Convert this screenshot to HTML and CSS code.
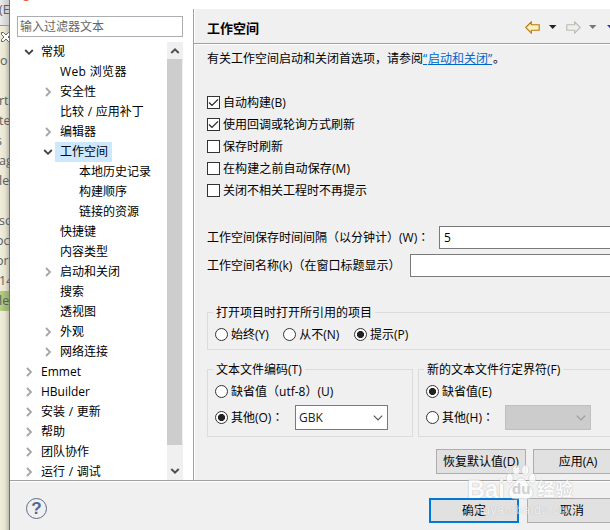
FILE: index.html
```
<!DOCTYPE html>
<html lang="zh-CN">
<head>
<meta charset="utf-8">
<title>工作空间</title>
<link rel="stylesheet" href="styles.css">
</head>
<body>
<svg class="defs" width="0" height="0">
  <symbol id="open" viewBox="0 0 10 10"><path d="M1.2 3 5 6.8 8.8 3" fill="none" stroke="#404040" stroke-width="1.8"/></symbol>
  <symbol id="shut" viewBox="0 0 10 10"><path d="M3 1 7 5 3 9" fill="none" stroke="#a6a6a6" stroke-width="1.8"/></symbol>
  <symbol id="tri" viewBox="0 0 8 4"><path d="M0 0h7.4L3.7 4z" fill="currentColor"/></symbol>
  <symbol id="drop" viewBox="0 0 10 6"><path d="M.8.7 5 4.9 9.2.7" fill="none" stroke="currentColor" stroke-width="1.1"/></symbol>
</svg>
<div class="screen">
  <aside class="editor">
    <div class="tab">(E</div>
    <div class="close"><svg width="10" height="10" viewBox="0 0 10 10"><path d="M.5.5h2L5 3 7.500.5h2v2L7 5l2.500 2.500v2h-2L5 7 2.500 9.500h-2v-2L3 5 .5 2.500z" fill="#fff" stroke="#555" stroke-width=".9"/></svg></div>
    <div class="line first">o</div><div class="line"></div><div class="line">rt</div><div class="line">te</div><div class="line cut">s</div><div class="line">ag</div><div class="line">le</div><div class="line"></div><div class="line">sc</div><div class="line cut">oc</div><div class="line cut">or</div><div class="line">14</div><div class="line current">le</div>
  </aside>
  <main class="dialog">
    <header class="titlebar"><span class="app-dot"></span></header>
    <div class="body">
      <nav class="side">
        <div class="filter">输入过滤器文本</div>
        <div class="tree-box">
          <ul class="tree">
            <li><svg><use href="#open"/></svg><span>常规</span></li>
            <li class="l2"><i></i><span class="web">Web 浏览器</span></li>
            <li class="l2"><svg><use href="#shut"/></svg><span>安全性</span></li>
            <li class="l2"><i></i><span class="spaced">比较 / 应用补丁</span></li>
            <li class="l2"><svg><use href="#shut"/></svg><span>编辑器</span></li>
            <li class="l2"><svg><use href="#open"/></svg><span class="selected">工作空间</span></li>
            <li class="l3"><i></i><span>本地历史记录</span></li>
            <li class="l3"><i></i><span>构建顺序</span></li>
            <li class="l3"><i></i><span>链接的资源</span></li>
            <li class="l2"><i></i><span>快捷键</span></li>
            <li class="l2"><i></i><span>内容类型</span></li>
            <li class="l2"><svg><use href="#shut"/></svg><span>启动和关闭</span></li>
            <li class="l2"><i></i><span>搜索</span></li>
            <li class="l2"><i></i><span>透视图</span></li>
            <li class="l2"><svg><use href="#shut"/></svg><span>外观</span></li>
            <li class="l2"><svg><use href="#shut"/></svg><span>网络连接</span></li>
            <li><svg><use href="#shut"/></svg><span>Emmet</span></li>
            <li><svg><use href="#shut"/></svg><span>HBuilder</span></li>
            <li><svg><use href="#shut"/></svg><span class="spaced">安装 / 更新</span></li>
            <li><svg><use href="#shut"/></svg><span>帮助</span></li>
            <li><svg><use href="#shut"/></svg><span>团队协作</span></li>
            <li><svg><use href="#shut"/></svg><span class="spaced">运行 / 调试</span></li>
          </ul>
          <div class="scroll">
            <svg width="10" height="10" viewBox="0 0 10 10"><path d="M1.300 7 5 3.300 8.700 7" fill="none" stroke="#505050" stroke-width="2"/></svg>
            <div class="thumb"></div>
            <svg width="10" height="10" viewBox="0 0 10 10"><path d="M1.300 3 5 6.700 8.700 3" fill="none" stroke="#505050" stroke-width="2"/></svg>
          </div>
        </div>
      </nav>
      <section class="page">
        <div class="page-head">
          <h1>工作空间</h1>
          <div class="nav">
            <svg width="15" height="13" viewBox="0 0 15 13"><path d="M.8 6.500 6.300.9v2.900h7.900v5.400H6.300v2.900z" fill="#fff0b4" stroke="#b27a16" stroke-width="1.100"/></svg>
            <svg class="dark" width="8" height="4"><use href="#tri"/></svg>
            <svg width="15" height="13" viewBox="0 0 15 13"><path d="M14.200 6.500 8.700.9v2.900H.8v5.400h7.900v2.900z" fill="#eeeeea" stroke="#b9b9b5" stroke-width="1.100"/></svg>
            <svg class="dim" width="8" height="4"><use href="#tri"/></svg>
            <svg class="blue" width="8" height="4"><use href="#tri"/></svg>
          </div>
        </div>
        <div class="content">
          <p class="intro">有关工作空间启动和关闭首选项，请参阅<a><span class="q">“</span>启动和关闭<span class="q">”</span></a>。</p>
          <div class="checks">
            <label><b class="box"><svg width="11" height="11" viewBox="0 0 11 11"><path d="M1 5.500 4 8.500 10 2.300" fill="none" stroke="#222" stroke-width="1.200"/></svg></b>自动构建(B)</label>
            <label><b class="box"><svg width="11" height="11" viewBox="0 0 11 11"><path d="M1 5.500 4 8.500 10 2.300" fill="none" stroke="#222" stroke-width="1.200"/></svg></b>使用回调或轮询方式刷新</label>
            <label><b class="box"></b>保存时刷新</label>
            <label><b class="box"></b><span class="latin">在构建之前自动保存(M)</span></label>
            <label><b class="box"></b>关闭不相关工程时不再提示</label>
          </div>
          <div class="field"><span class="wide">工作空间保存时间间隔<span class="c" lang="zh-TW">（</span>以分钟计<span class="c" lang="zh-TW">）</span>(W)<span class="c" lang="zh-TW">：</span></span><div class="input">5</div></div>
          <div class="field second"><span class="name">工作空间名称(k)<span class="c" lang="zh-TW">（</span>在窗口标题显示<span class="c" lang="zh-TW">）</span></span><div class="input"></div></div>
          <div class="group refs">
            <div class="legend">打开项目时打开所引用的项目</div>
            <div class="radios"><label><b class="radio"></b>始终(Y)</label><label><b class="radio"></b>从不(N)</label><label><b class="radio on"></b>提示(P)</label></div>
          </div>
          <div class="groups">
            <div class="group encoding">
              <div class="legend">文本文件编码(T)</div>
              <label class="top"><b class="radio"></b><span>缺省值<span class="c" lang="zh-TW">（</span>utf-8<span class="c" lang="zh-TW">）</span>(U)</span></label>
              <div class="other"><label><b class="radio on"></b><span>其他(O)<span class="c" lang="zh-TW">：</span></span></label><div class="select">GBK<svg width="10" height="6"><use href="#drop"/></svg></div></div>
            </div>
            <div class="group delimiter">
              <div class="legend">新的文本文件行定界符(F)</div>
              <label class="top"><b class="radio on"></b>缺省值(E)</label>
              <div class="other"><label><b class="radio"></b><span>其他(H)<span class="c" lang="zh-TW">：</span></span></label><div class="select disabled"><svg width="10" height="6"><use href="#drop"/></svg></div></div>
            </div>
          </div>
          <div class="actions"><div class="button">恢复默认值(D)</div><div class="button">应用(A)</div></div>
        </div>
      </section>
    </div>
    <footer>
      <div class="help"><span>?</span></div>
      <div class="button primary">确定</div><div class="button">取消</div>
    </footer>
  </main>
  <div class="watermark">
    <div class="brand"><span class="bai">Bai</span><div class="paw"><svg width="32" height="36" viewBox="0 0 34 35" preserveAspectRatio="none"><g fill="#fff" stroke="#ccc" stroke-width=".8"><ellipse cx="5" cy="14" rx="3.700" ry="4.800"/><ellipse cx="12" cy="6" rx="3.800" ry="5"/><ellipse cx="21.500" cy="6" rx="3.800" ry="5"/><ellipse cx="29" cy="14" rx="3.700" ry="4.800"/><path d="M17 13.500c5 0 6 5 10 9 4 3 4 9-1 11-4 1-6 0-9 0s-5 1-9 0c-5-2-5-8-1-11 4-4 5-9 10-9z"/></g></svg><em>du</em></div><span class="cn">经验</span></div>
    <div class="url">jingyan.baidu.com</div>
  </div>
</div>
</body>
</html>
```

FILE: styles.css
```
* { box-sizing: border-box; }
body {
  margin: 0;
  overflow: hidden;
  font: 12px/20px "Open Sans", "Noto Sans CJK SC", sans-serif;
  color: #000;
}
svg { display: block; flex: none; }
.defs { position: absolute; }
.screen { position: relative; display: flex; width: 610px; height: 530px; overflow: hidden; }

.editor {
  flex: none;
  width: 9px;
  overflow: hidden;
  color: #555f60;
  font-size: 12.5px;
  white-space: nowrap;
  background: linear-gradient(90deg, #f0edda, #e8e4d2 55%, #bdbbae);
}
.tab { height: 26px; border-bottom: 1px solid #999; background: linear-gradient(90deg, #ececec, #c9c9c9); text-indent: -1px; }
.close { height: 25px; padding: 6px 0 0 1px; }
.line { height: 20px; text-indent: -1px; }
.line.first { text-indent: 0; }
.line.cut { text-indent: -4px; }
.line.current { background: linear-gradient(90deg, #b7d287, #93a96d); }

.dialog { flex: none; display: flex; flex-direction: column; width: 601px; border-left: 1px solid #2b83d6; background: #fff; }
.titlebar { height: 9px; overflow: hidden; flex: none; }
.app-dot { display: block; width: 10px; height: 10px; margin: -9px 0 0 11px; border-radius: 50%; background: #e8492f; }
.body { display: flex; height: 471px; flex: none; }

.side { flex: none; width: 183px; padding: 7px 10px 0 7px; }
.filter { height: 21px; border: 1px solid #abadb3; padding-left: 2px; color: #666; line-height: 20px; }
.tree-box { display: flex; height: 438px; margin-top: 5px; overflow: hidden; }
.tree { flex: 1; margin: 0; padding: 0; list-style: none; white-space: nowrap; }
.tree li { display: flex; align-items: center; height: 20px; padding-left: 6.5px; }
.tree .l2 { padding-left: 25.5px; }
.tree .l3 { padding-left: 44.5px; }
.tree svg, .tree i { width: 10px; height: 10px; flex: none; }
.tree span { margin-left: 3.5px; padding: 0 4px; }
.tree .spaced { word-spacing: .6px; }
.tree .web { letter-spacing: .35px; }
.tree .selected { margin-left: 2.5px; padding-left: 5px; background: #cce8ff; }
.scroll { display: flex; flex-direction: column; align-items: center; width: 16px; padding-top: 4px; background: #f0f0f0; }
.thumb { width: 15px; height: 386px; margin: 3px 1px 21px 0; background: #cdcdcd; flex: none; }

.page { flex: 1; min-width: 0; border-left: 1px solid #a0a0a0; box-shadow: inset 1px 0 #fff; background: #f0f0f0; }
.page-head { display: flex; align-items: center; height: 35px; padding: 3px 0 0 13px; border-bottom: 1px solid #a0a0a0; box-shadow: 0 1px #fff; }
h1 { flex: none; width: 318px; margin: 0; font-size: 13px; line-height: 20px; }
.nav { display: flex; align-items: center; margin-top: -1px; }
.nav .dark { margin: 0 9px 0 9px; color: #222; }
.nav .dim { margin: 0 10px 0 8px; color: #777; }
.nav .blue { color: #333399; }

.content { padding: 5px 0 0 13px; white-space: nowrap; }
.intro { height: 20px; margin: 0; }
.intro a { color: #0066cc; text-decoration: underline; }
.q { display: inline-block; width: 5px; text-decoration: underline; }
.c { font-family: "Noto Sans CJK TC", sans-serif; line-height: 1; }
.checks { margin-top: 23px; }
label { display: flex; align-items: center; gap: 4px; }
.checks label { height: 22px; gap: 3px; }
.latin { letter-spacing: .1px; }
.box { width: 13px; height: 13px; margin-top: -1px; border: 1px solid #333; background: #fff; }
.radio { width: 13px; height: 13px; margin-top: -1px; margin-right: -1px; border: 1px solid #333; border-radius: 50%; background: #fff; flex: none; }
.radio.on { background: radial-gradient(circle, #222 0 3.200px, #fff 3.900px); }
.field { display: flex; align-items: center; height: 23px; margin-top: 24px; }
.second { margin-top: 5px; }
.wide { width: 232px; flex: none; }
.name { width: 203px; flex: none; }
.input { flex: 1; height: 23px; padding-left: 4px; border: 1px solid #7a7a7a; border-right: 0; background: #fff; line-height: 21px; }

.group { border: 1px solid #dcdcdc; }
.legend { width: max-content; height: 20px; margin: -10px 0 0 5px; padding: 0 3px; background: #f0f0f0; }
.refs { height: 38px; margin-top: 35px; border-right: 0; }
.radios { display: flex; gap: 14.5px; margin: 2px 0 0 7px; }
.groups { display: flex; gap: 5px; margin-top: 19px; }
.encoding { width: 206px; height: 68px; flex: none; }
.delimiter { flex: 1; height: 68px; border-right: 0; }
.top { height: 20px; margin: 2px 0 0 7px; }
.other { display: flex; align-items: center; height: 25px; margin: 3px 0 0 7px; }
.other label { width: 80px; flex: none; }
.delimiter .other label { width: 79px; }
.select { display: flex; align-items: center; justify-content: space-between; width: 93px; height: 25px; padding: 0 4px 0 3px; border: 1px solid #7a7a7a; background: #fff; color: #222; }
.select svg { color: #555; }
.disabled { justify-content: flex-end; width: 86px; border-color: #bfbfbf; background: #ccc; }
.disabled svg { color: #999; }
.button { display: flex; align-items: center; justify-content: center; flex: none; width: 90px; height: 25px; border: 1px solid #adadad; background: #e1e1e1; }
.actions { display: flex; gap: 7px; margin: 12px 0 0 229px; }

footer { display: flex; flex: 1; padding: 17px 0 0 16px; border-top: 1px solid #a0a0a0; box-shadow: inset 0 1px #fff; background: #f0f0f0; }
.help { display: flex; align-items: center; justify-content: center; width: 21px; height: 21px; margin-right: 382px; border: 1px solid #5c6b89; border-radius: 50%; color: #52678f; font: bold 17px/19px "Liberation Sans", sans-serif; flex: none; }
.primary { border: 2px solid #0078d7; margin-right: 8px; }

.watermark { position: absolute; left: 467px; top: 464px; width: 125px; height: 66px; color: #fff; opacity: .75; text-shadow: 0 0 1px #888; pointer-events: none; }
.brand { display: flex; align-items: flex-end; height: 36px; }
.bai { width: 38px; font: bold 25px/22px "Liberation Sans", sans-serif; letter-spacing: -.5px; }
.paw { position: relative; width: 32px; height: 36px; }
.paw em { position: absolute; left: 7px; top: 16px; color: #c4c4c4; font: bold 15px/18px "Liberation Sans", sans-serif; text-shadow: none; }
.cn { font: bold 18px/24px "Noto Sans CJK SC", sans-serif; }
.url { margin-left: 2px; opacity: .7; font: 12px/20px "Liberation Sans", sans-serif; letter-spacing: .7px; }
```
